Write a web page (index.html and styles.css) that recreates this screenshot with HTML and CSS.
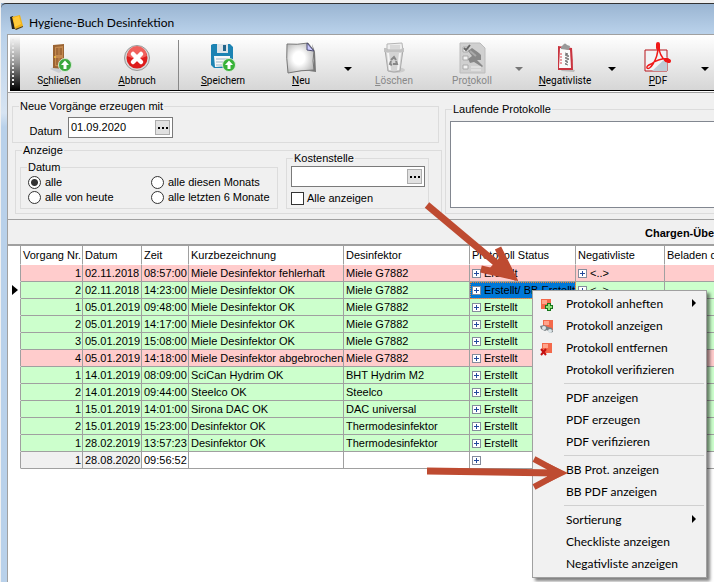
FILE: index.html
```html
<!DOCTYPE html>
<html lang="de">

<head>
	<meta charset="UTF-8">
	<title>Hygiene-Buch Desinfektion</title>
	<link rel="stylesheet" href="styles.css">
</head>

<body>
	<div class="window">
		<div class="titlebar">
			<svg class="app_icon" viewBox="0 0 14 15" width="14" height="15">
				<path d="M0 2L3 1L5 14L2 14Z" fill="#222" />
				<path d="M2 2L10 0L13 11L5 14Z" fill="#f2b417" />
				<path d="M3 3L9 1L11 9L5 12Z" fill="#ffca3c" />
				<path d="M5 14L13 11L13 12L6 15Z" fill="#5a3c00" />
			</svg>
			<h1>Hygiene-Buch Desinfektion</h1>
		</div>
		<div class="client">
			<div class="toolbar">
				<div class="grip"></div>
				<button type="button" class="tool">
					<svg viewBox="0 0 32 32" width="32" height="32">
						<path d="M7 27L12 24L22 27L16 31Z" fill="#c9cdd2" />
						<path d="M10 3L21 2V27L10 26Z" fill="#9a6433" />
						<path d="M12 5L20 4V25L12 24Z" fill="#c48a50" />
						<path d="M13 6h2.500v7H13zM16.500 6H19v7h-2.500zM13 16h2.500v7H13zM16.500 16H19v8h-2.500z" fill="#a26a38" />
						<circle cx="12" cy="15" r="1" fill="#f4c542" />
						<circle cx="22" cy="23" r="6.500" fill="#3aa83c" stroke="#d7ead7" />
						<path d="M22 18.500L26 23H23.500V27H20.500V23H18Z" fill="#fff" />
					</svg>
					<span>S<u>c</u>hließen</span>
				</button>
				<button type="button" class="tool">
					<svg viewBox="0 0 32 32" width="32" height="32">
						<circle cx="16" cy="16" r="12.500" fill="#d8d8d8" stroke="#999" />
						<circle cx="16" cy="16" r="10.500" fill="#dd1c1c" />
						<path d="M6 14a10 10 0 0 1 20 0q-10 5-20 0z" fill="#f0605c" />
						<path d="M12 12l8 8m0-8l-8 8" stroke="#fff" stroke-width="4.500" stroke-linecap="round" />
					</svg>
					<span><u>A</u>bbruch</span>
				</button>
				<div class="divider"></div>
				<button type="button" class="tool">
					<svg viewBox="0 0 32 32" width="32" height="32">
						<path d="M4 3L6 2H23L26 5V24L24 26H7L4 23Z" fill="#1c83b3" />
						<path d="M10 2H21V11H10Z" fill="#dce3e8" />
						<path d="M16 3h3v6h-3z" fill="#23648a" />
						<path d="M7 14H23V24L8 25Z" fill="#f8f8f8" />
						<path d="M9 17h12M9 20h12M9 23h8" stroke="#9db5c4" />
						<circle cx="22" cy="23" r="6.500" fill="#38b238" stroke="#d7ead7" />
						<path d="M22 18.500L26 23H23.500V27H20.500V23H18Z" fill="#fff" />
					</svg>
					<span><u>S</u>peichern</span>
				</button>
				<button type="button" class="tool">
					<svg viewBox="0 0 32 32" width="32" height="32">
						<defs>
							<radialGradient id="paper" cx=".45" cy=".5" r=".7">
								<stop offset=".3" stop-color="#fff" />
								<stop offset="1" stop-color="#aaa" />
							</radialGradient>
						</defs>
						<path d="M5 30Q17 27 31 30L30 10L27 2Q30 18 28 28Z" fill="#777" />
						<path d="M2 2Q12 3 23 1L29 9Q27 19 29 28Q16 28 3 31Q1 16 2 2Z" fill="url(#paper)" stroke="#777" />
						<path d="M22 1L29 9L22 8Z" fill="#c9c9ff" stroke="#4b4b70" />
					</svg>
					<span><u>N</u>eu</span>
				</button>
				<button type="button" class="drop" aria-label="Neu Auswahl"></button>
				<button type="button" class="tool" disabled>
					<svg viewBox="0 0 32 32" width="32" height="32">
						<ellipse cx="18" cy="28" rx="9" ry="3" fill="#ccc" />
						<path d="M9 2L24 1L25 9H9Z" fill="#eee" stroke="#b5b5b5" />
						<path d="M12 4h10M12 6h10" stroke="#c5c5c5" />
						<path d="M7 8H25L22 29Q16 31 10 29Z" fill="#d4d4d4" stroke="#aaa" />
						<path d="M6 6H9V8H23L24 6H26V10H6Z" fill="#c2c2c2" />
						<path d="M10 11L12 28M22 11L20 28" stroke="#f5f5f5" stroke-width="2" />
						<path d="M13 18l3-3 2 3M18 19l1 3h-4M14 23l-2-1 1-3" fill="none" stroke="#888" stroke-width="2" />
					</svg>
					<span><u>L</u>öschen</span>
				</button>
				<button type="button" class="tool" disabled>
					<svg viewBox="0 0 32 32" width="32" height="32">
						<path d="M4 1H24L29 6V31H4Z" fill="#d0d0d0" stroke="#bcbcbc" />
						<path d="M7 5h5v5H7zM7 14h5v4H7zM7 23h5v4H7z" fill="#f3f3f3" stroke="#aaa" />
						<path d="M8 6l2 2 4-5" fill="none" stroke="#666" stroke-width="2" />
						<path d="M15 28h10M15 25h10" stroke="#eee" />
						<path d="M12 9L16 6L23 11L25 13L25 18L21 18L27 24L26 25L18 20L14 21L12 17L16 14Z" fill="#888" />
						<path d="M14 9l6 5" stroke="#aaa" stroke-width="2" />
					</svg>
					<span>Pro<u>t</u>okoll</span>
				</button>
				<button type="button" class="drop" aria-label="Protokoll Auswahl" disabled></button>
				<button type="button" class="tool">
					<svg viewBox="0 0 32 32" width="32" height="32">
						<path d="M12 29L25 30L26 28L14 26Z" fill="#bbb" />
						<path d="M9 4L23 6Q24 18 24 28L9 28Z" fill="#c9343f" />
						<path d="M11 6L21 8L22 26L10 26Z" fill="#fafafa" />
						<path d="M12 5L14 3Q16 0 18 3L21 4L20 8L12 7Z" fill="#999" />
						<path d="M16 11l3 1-3 1 4 1-4 2 4 1-4 2 3 1-3 2 3 1" fill="none" stroke="#777" />
						<path d="M11 12h2M11 15h2M11 18h2M11 21h2" stroke="#d9434c" />
					</svg>
					<span><u>N</u>egativliste</span>
				</button>
				<button type="button" class="drop" aria-label="Negativliste Auswahl"></button>
				<button type="button" class="tool">
					<svg viewBox="0 0 32 32" width="32" height="32">
						<path d="M3 8H25V29H3Z" fill="#f2f4f6" stroke="#b7141b" />
						<path d="M10 29L25 15V29Z" fill="#bfcdd6" />
						<path d="M5 26Q7 28 11 22Q16 14 16 5Q16 0 17 4Q17 14 24 19Q30 20 26 17Q18 16 9 22Q4 24 5 26Z" fill="none" stroke="#f01818" stroke-width="1.500" />
						<path d="M16 2v4M24 18l3 1" stroke="#f01818" stroke-width="4" stroke-linecap="round" />
					</svg>
					<span><u>P</u>DF</span>
				</button>
				<button type="button" class="drop" aria-label="PDF Auswahl"></button>
			</div>

			<form class="filter">
				<div class="filter_left">
					<fieldset class="new_group">
						<legend>Neue Vorgänge erzeugen mit</legend>
						<label for="datum">Datum</label>
						<div class="field date_field">
							<input type="text" id="datum" value="01.09.2020">
							<button type="button" aria-label="Datum wählen"></button>
						</div>
					</fieldset>
					<fieldset class="view_group">
						<legend>Anzeige</legend>
						<fieldset class="range_group">
							<legend>Datum</legend>
							<label><input type="radio" name="range" checked>alle</label>
							<label><input type="radio" name="range">alle diesen Monats</label>
							<label><input type="radio" name="range">alle von heute</label>
							<label><input type="radio" name="range">alle letzten 6 Monate</label>
						</fieldset>
						<fieldset class="cost_group">
							<legend>Kostenstelle</legend>
							<div class="field">
								<input type="text" aria-label="Kostenstelle">
								<button type="button" aria-label="Kostenstelle wählen"></button>
							</div>
							<label><input type="checkbox">Alle anzeigen</label>
						</fieldset>
					</fieldset>
				</div>
				<fieldset class="running_group">
					<legend>Laufende Protokolle</legend>
					<select size="5" aria-label="Laufende Protokolle"></select>
				</fieldset>
			</form>

			<h2 class="list_title">Chargen-Übersicht</h2>

			<div class="list">
				<table>
					<colgroup>
						<col class="c_mark">
						<col class="c_nr">
						<col class="c_date">
						<col class="c_time">
						<col class="c_name">
						<col class="c_device">
						<col class="c_status">
						<col class="c_neg">
						<col>
					</colgroup>
					<thead>
						<tr><th></th><th>Vorgang Nr.</th><th>Datum</th><th>Zeit</th><th>Kurzbezeichnung</th><th>Desinfektor</th><th>Protokoll Status</th><th>Negativliste</th><th>Beladen durch</th></tr>
					</thead>
					<tbody>
						<tr class="bad"><td></td><td>1</td><td>02.11.2018</td><td>08:57:00</td><td>Miele Desinfektor fehlerhaft</td><td>Miele G7882</td><td><i class="plus"></i>Erstellt</td><td><i class="plus"></i>&lt;..&gt;</td><td></td></tr>
						<tr class="ok current"><td></td><td>2</td><td>02.11.2018</td><td>14:23:00</td><td>Miele Desinfektor OK</td><td>Miele G7882</td><td class="selected"><i class="plus"></i>Erstellt/ BB Erstellt</td><td><i class="plus"></i>&lt;..&gt;</td><td></td></tr>
						<tr class="ok"><td></td><td>1</td><td>05.01.2019</td><td>09:48:00</td><td>Miele Desinfektor OK</td><td>Miele G7882</td><td><i class="plus"></i>Erstellt</td><td></td><td></td></tr>
						<tr class="ok"><td></td><td>2</td><td>05.01.2019</td><td>14:17:00</td><td>Miele Desinfektor OK</td><td>Miele G7882</td><td><i class="plus"></i>Erstellt</td><td></td><td></td></tr>
						<tr class="ok"><td></td><td>3</td><td>05.01.2019</td><td>15:08:00</td><td>Miele Desinfektor OK</td><td>Miele G7882</td><td><i class="plus"></i>Erstellt</td><td></td><td></td></tr>
						<tr class="bad"><td></td><td>4</td><td>05.01.2019</td><td>14:18:00</td><td>Miele Desinfektor abgebrochen</td><td>Miele G7882</td><td><i class="plus"></i>Erstellt</td><td></td><td></td></tr>
						<tr class="ok"><td></td><td>1</td><td>14.01.2019</td><td>08:09:00</td><td>SciCan Hydrim OK</td><td>BHT Hydrim M2</td><td><i class="plus"></i>Erstellt</td><td></td><td></td></tr>
						<tr class="ok"><td></td><td>2</td><td>14.01.2019</td><td>09:44:00</td><td>Steelco OK</td><td>Steelco</td><td><i class="plus"></i>Erstellt</td><td></td><td></td></tr>
						<tr class="ok"><td></td><td>1</td><td>15.01.2019</td><td>14:01:00</td><td>Sirona DAC OK</td><td>DAC universal</td><td><i class="plus"></i>Erstellt</td><td></td><td></td></tr>
						<tr class="ok"><td></td><td>2</td><td>15.01.2019</td><td>15:23:00</td><td>Desinfektor OK</td><td>Thermodesinfektor</td><td><i class="plus"></i>Erstellt</td><td></td><td></td></tr>
						<tr class="ok"><td></td><td>1</td><td>28.02.2019</td><td>13:57:23</td><td>Desinfektor OK</td><td>Thermodesinfektor</td><td><i class="plus"></i>Erstellt</td><td></td><td></td></tr>
						<tr class="open"><td></td><td>1</td><td>28.08.2020</td><td>09:56:52</td><td></td><td></td><td><i class="plus"></i></td><td></td><td></td></tr>
					</tbody>
				</table>
			</div>
		</div>

		<div class="menu">
			<button type="button" class="sub">
				<svg viewBox="0 0 14 14" width="14" height="14"><path d="M1 1h10v10H1z" fill="#f4694b" /><path d="M2 2h5v4H2z" fill="#ffa48b" /><path d="M9 5v8M5 9h8" stroke="#16761b" stroke-width="4" /><path d="M9 6v6M6 9h6" stroke="#8ee07c" stroke-width="2" /></svg>
				Protokoll anheften
			</button>
			<button type="button">
				<svg viewBox="0 0 14 14" width="14" height="14"><path d="M3 0h10v10H3z" fill="#f4694b" /><path d="M4 1h5v4H4z" fill="#ffa48b" /><path d="M0 6l4-1 4 2 4 1 1 4-3 1-3-3-2 1-4-2z" fill="#777f83" /><circle cx="4" cy="8" r="2" fill="#dce5e8" /><circle cx="10" cy="11" r="2" fill="#dce5e8" /></svg>
				Protokoll anzeigen
			</button>
			<button type="button">
				<svg viewBox="0 0 14 14" width="14" height="14"><path d="M2 1h10v10H2z" fill="#f4694b" /><path d="M3 2h5v4H3z" fill="#ffa48b" /><path d="M1 7l5 6M6 7l-5 6" stroke="#c41212" stroke-width="2" /></svg>
				Protokoll entfernen
			</button>
			<button type="button">Protokoll verifizieren</button>
			<hr>
			<button type="button">PDF anzeigen</button>
			<button type="button">PDF erzeugen</button>
			<button type="button">PDF verifizieren</button>
			<hr>
			<button type="button">BB Prot. anzeigen</button>
			<button type="button">BB PDF anzeigen</button>
			<hr>
			<button type="button" class="sub">Sortierung</button>
			<button type="button">Checkliste anzeigen</button>
			<button type="button">Negativliste anzeigen</button>
		</div>

		<!-- Hinweispfeile -->
		<svg class="pointer pointer_status" viewBox="0 0 96 84" width="96" height="84">
			<path d="M5 6L86 74" stroke-width="7" />
			<path d="M76 49L90 77L59 70" stroke-width="7" />
			<path d="M79 57L94 82L66 71Z" class="tip" />
		</svg>
		<svg class="pointer pointer_menu" viewBox="0 0 144 38" width="144" height="38">
			<path d="M0 17L130 19" stroke-width="7" />
			<path d="M107 5L133 19L107 33" stroke-width="6" />
			<path d="M120 9L141 19L120 29Z" class="tip" />
		</svg>
	</div>
</body>

</html>
```
FILE: styles.css
```css
* {
	box-sizing: border-box;
}

body {
	margin: 0;
	background: #f0f0f0;
	font-family: "Liberation Sans", Arial, sans-serif;
	font-size: 11px;
	line-height: 13px;
	color: #000;
	overflow: hidden;
}

button,
input,
select {
	margin: 0;
	padding: 0;
	font: inherit;
	color: inherit;
}

/* Fenster */
.window {
	position: relative;
	display: flex;
	flex-direction: column;
	height: 100vh;
	margin-left: 1px;
	padding-left: 6px;
	border-top: 3px solid #f0f0f0;
	background: linear-gradient(#99b4d1, #b9d1ea 30px, #d7e4f2 110px, #b9d1ea 124px);
}

.titlebar {
	display: flex;
	align-items: center;
	gap: 5px;
	height: 31px;
	margin-left: -6px;
	padding: 6px 0 0 9px;
	border-top: 1px solid #333;
	border-radius: 5px 0 0 0;
}

.titlebar h1 {
	margin: 0;
	font: 12px Lato, "Open Sans", sans-serif;
}

.client {
	flex: 1;
	display: flex;
	flex-direction: column;
	min-height: 0;
	border-top: 1px solid #a0a0a0;
	border-left: 1px solid #a0a0a0;
	background: #fff;
}

/* Symbolleiste */
.toolbar {
	display: flex;
	flex: none;
	height: 56px;
	margin-left: 2px;
	border-bottom: 1px solid #000;
	background: linear-gradient(#fff, #d6d6d6);
	overflow: hidden;
}

.grip {
	flex: none;
	width: 10px;
	padding: 4px 2px;
	background: linear-gradient(#fff, #999 50%, #000);
}

.grip::before {
	content: "";
	display: block;
	width: 2px;
	height: 48px;
	background: repeating-linear-gradient(#e8e8e8 0 2px, transparent 2px 4px);
}

.tool {
	flex: none;
	display: flex;
	flex-direction: column;
	align-items: center;
	width: 78px;
	padding-top: 7px;
	border: 0;
	background: none;
	font-family: Roboto, sans-serif;
	font-size: 10px;
}

.tool:disabled {
	color: #888;
}

.drop {
	flex: none;
	width: 15px;
	padding-top: 12px;
	border: 0;
	background: none;
}

.drop::before {
	content: "";
	display: block;
	width: 0;
	margin: 0 auto;
	border: 4px solid transparent;
	border-top-color: #000;
	border-bottom: 0;
}

.drop:disabled::before {
	border-top-color: #777;
}

.divider {
	flex: none;
	width: 1px;
	margin: 5px 5px 0 2px;
	background: #888;
}

/* Filterbereich */
.filter {
	display: flex;
	flex: none;
	gap: 3px;
	margin-top: 1px;
	padding: 7px 0 5px 4px;
	border-top: 1px solid #a0a0a0;
	border-bottom: 1px solid #a0a0a0;
	background: #f0f0f0;
	overflow: hidden;
}

.filter_left {
	flex: none;
	width: 430px;
}

fieldset {
	min-width: 0;
	margin: 0;
	padding: 0;
	border: 1px solid #dcdcdc;
}

legend {
	margin-left: 2px;
	padding: 0 1px;
	line-height: 13px;
}

.new_group {
	display: flex;
	align-items: flex-end;
	gap: 6px;
	margin: 0 3px 1px 0;
	padding: 4px 0 4px 0;
}

.new_group > legend {
	margin-left: 6px;
}

.new_group > label {
	width: 49px;
	text-align: right;
}

.field {
	display: flex;
	align-items: center;
	height: 21px;
	padding: 0 2px;
	border: 1px solid #7a7a7a;
	background: #fff;
}

.date_field {
	width: 105px;
}

.field input {
	flex: 1;
	min-width: 0;
	border: 0;
	background: none;
	outline: 0;
}

.field button {
	display: flex;
	align-items: center;
	justify-content: center;
	width: 15px;
	height: 15px;
	border: 1px solid #adadad;
	background: #e1e1e1;
}

.field button::before {
	content: "";
	width: 10px;
	height: 2px;
	background: repeating-linear-gradient(90deg, #000 0 2px, transparent 2px 4px);
}

.view_group {
	display: flex;
	align-items: flex-end;
	gap: 8px;
	margin-left: 3px;
	padding: 3px 4px 4px 4px;
}

.range_group {
	display: grid;
	grid-template-columns: 123px auto;
	width: 258px;
	padding: 1px 0 3px 7px;
}

.range_group legend {
	margin-left: -1px;
}

.range_group label,
.cost_group label {
	display: flex;
	align-items: center;
	gap: 4px;
	height: 15px;
}

.cost_group {
	width: 143px;
	margin-top: -8px;
	padding: 1px 3px 2px 4px;
}

.cost_group label {
	gap: 3px;
	margin-top: 4px;
}

[type="radio"],
[type="checkbox"] {
	appearance: none;
	width: 13px;
	height: 13px;
	border: 1px solid #333;
	background: #fff;
}

[type="radio"] {
	border-radius: 50%;
}

[type="radio"]:checked {
	background: radial-gradient(#333 0 3px, #fff 4px);
}

.running_group {
	flex: 1;
	margin: 3px -10px 0 0;
	padding: 5px 4px 3px 4px;
}

.running_group select {
	display: block;
	width: 100%;
	height: 87px;
	border: 1px solid #828790;
	border-radius: 0;
	background: #fff;
}

.list_title {
	flex: none;
	height: 26px;
	margin: 0;
	padding-left: 637px;
	border-bottom: 2px solid #a0a0a0;
	background: #f0f0f0;
	font-size: 11px;
	line-height: 26px;
	white-space: nowrap;
	overflow: hidden;
}

/* Tabelle */
.list {
	flex: 1;
	overflow: hidden;
}

table {
	width: 100%;
	table-layout: fixed;
	border-collapse: separate;
	border-spacing: 0;
}

.c_mark { width: 13px; }
.c_nr { width: 62px; }
.c_date { width: 59px; }
.c_time { width: 47px; }
.c_name { width: 155px; }
.c_device { width: 126px; }
.c_status { width: 106px; }
.c_neg { width: 89px; }

th,
td {
	height: 17px;
	padding: 0 1px 0 2px;
	border-right: 1px solid #a0a0a0;
	border-bottom: 1px solid #a0a0a0;
	text-align: left;
	font-weight: normal;
	line-height: 15px;
	white-space: nowrap;
	overflow: hidden;
}

th {
	height: 19px;
	border-bottom-color: #fff;
}

th:last-child,
td:last-child {
	border-right: 0;
}

td:first-child {
	padding: 0;
	border-bottom-color: #fff;
}

td:nth-child(2) {
	text-align: right;
}

.bad td {
	background: #fcc;
}

.ok td {
	background: #cfc;
}

.open td:nth-child(2),
.open td:nth-child(3) {
	background: #f0f0f0;
}

tr td:first-child {
	background: #fff;
}

.current td:first-child::before {
	content: "";
	display: block;
	width: 0;
	margin-left: 4px;
	border: 5px solid transparent;
	border-left: 6px solid #000;
	border-right: 0;
}

.ok .selected {
	background: #0078d7;
	outline: 1px dotted #ff8728;
	outline-offset: -1px;
}

.plus {
	display: inline-block;
	width: 9px;
	height: 9px;
	margin-right: 3px;
	border: 1px solid #848c9c;
	vertical-align: -1px;
	background:
		linear-gradient(#234a9c, #234a9c) center / 5px 1px no-repeat,
		linear-gradient(#234a9c, #234a9c) center / 1px 5px no-repeat,
		#fff;
}

/* Kontextmenü */
.menu {
	position: absolute;
	left: 531px;
	top: 287px;
	width: 175px;
	padding: 2px;
	border: 1px solid #a0a0a0;
	background: #f1f1f1;
	box-shadow: 3px 3px 3px rgba(0, 0, 0, 0.5);
}

.menu button {
	position: relative;
	display: block;
	width: 100%;
	height: 22px;
	padding-left: 31px;
	border: 0;
	background: none;
	font: 12px/22px Lato, "Open Sans", sans-serif;
	text-align: left;
	white-space: nowrap;
}

.menu svg {
	position: absolute;
	left: 5px;
	top: 5px;
}

.menu .sub::after {
	content: "";
	position: absolute;
	right: 8px;
	top: 6px;
	border: 4px solid transparent;
	border-left-color: #000;
	border-right: 0;
}

.menu hr {
	height: 1px;
	margin: 2px 0 3px 29px;
	border: 0;
	background: #d0d0d0;
}

.pointer {
	position: absolute;
	fill: none;
	stroke: #be4b31;
	pointer-events: none;
}

.pointer .tip {
	fill: #be4b31;
	stroke: none;
}

.pointer_status {
	left: 421px;
	top: 196px;
}

.pointer_menu {
	left: 426px;
	top: 451px;
}
```
